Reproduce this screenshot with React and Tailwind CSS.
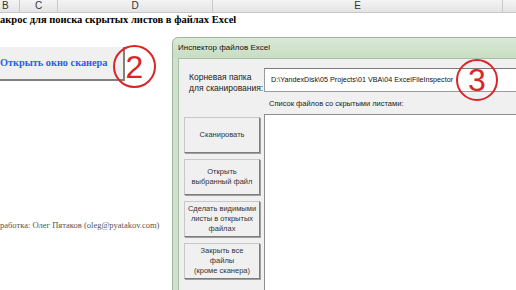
export default function App() {
  const ui = { fontFamily: '"Liberation Sans", Arial, sans-serif' };
  const serif = { fontFamily: '"Liberation Serif", "Times New Roman", serif' };

  const buttons = [
    ["Сканировать"],
    ["Открыть", "выбранный файл"],
    ["Сделать видимыми", "листы в открытых", "файлах"],
    ["Закрыть все", "файлы", "(кроме сканера)"],
  ];

  return (
    <div className="relative h-[290px] w-[516px] overflow-hidden bg-white">
      {/* column headers */}
      <div
        className="flex h-[13px] border-b border-[#c6c6c6] bg-gradient-to-b from-[#f4f4f4] to-[#e4e4e4] text-[10px] leading-[12px] text-[#333]"
        style={ui}
      >
        <div className="w-[20px] border-r border-[#c8c8c8] pl-[2px]">B</div>
        <div className="w-[38px] border-r border-[#c8c8c8] text-center">C</div>
        <div className="w-[155px] border-r border-[#c8c8c8] text-center">D</div>
        <div className="w-[290px] border-r border-[#c8c8c8] text-center">E</div>
        <div className="flex-1" />
      </div>

      {/* sheet */}
      <div className="flex flex-col" style={serif}>
        <div className="h-[14px] whitespace-nowrap text-[10.5px] font-bold leading-[14px] text-black">
          акрос для поиска скрытых листов в файлах Excel
        </div>
        <div className="mt-[20px] flex h-[34px] w-[125px] items-center whitespace-nowrap border-r-2 border-b-2 border-[#808080] bg-[#f0f0f0] text-[10.3px] font-bold text-[#2a5cf5]">
          Открыть окно сканера
        </div>
        <div className="mt-[138px] whitespace-nowrap text-[8.5px] leading-[12px] text-[#555]">
          работка: Олег Пятаков (oleg@pyatakov.com)
        </div>
      </div>

      {/* dialog window */}
      <div
        className="absolute left-[172px] top-[37px] flex h-[270px] w-[400px] flex-col rounded-tl-[6px] border border-[#9db59a] bg-[#cfe2cb] text-[#111]"
        style={ui}
      >
        <div className="flex h-[20px] shrink-0 items-center whitespace-nowrap rounded-tl-[6px] bg-gradient-to-b from-[#d9e9d6] to-[#c8ddc4] pl-[5px] text-[8px]">
          Инспектор файлов Excel
        </div>
        <div className="ml-[5px] flex flex-1 flex-col border-t border-l border-[#a9bea6] bg-[#f0f0f0] pt-[9px]">
          <div className="flex">
            <div className="w-[85px] shrink-0 whitespace-nowrap pl-[10px] pt-[4px] text-[8.5px] leading-[11px] text-[#222]">
              Корневая папка
              <br />
              для сканирования:
            </div>
            <div className="flex h-[24px] flex-1 items-center whitespace-nowrap border border-[#9a9a9a] border-t-[#7a7a7a] bg-white pl-[6px] text-[7.2px] text-[#111]">
              D:\YandexDisk\05 Projects\01 VBA\04 ExcelFileInspector
            </div>
          </div>
          <div className="flex flex-1">
            <div className="flex w-[85px] shrink-0 flex-col gap-[6px] pl-[5px] pt-[23px]">
              {buttons.map((lines, i) => (
                <div
                  key={i}
                  className="flex h-[36px] w-[76px] shrink-0 flex-col items-center justify-center whitespace-nowrap border border-[#c8c8c8] border-r-[#7d7d7d] border-b-[#7d7d7d] bg-[#f0f0f0] text-center text-[7.5px] leading-[10px] text-[#333] shadow-[1px_1px_0_#a0a0a0]"
                >
                  {lines.map((l) => (
                    <span key={l}>{l}</span>
                  ))}
                </div>
              ))}
            </div>
            <div className="flex flex-1 flex-col">
              <div className="flex h-[20px] items-center whitespace-nowrap pl-[5px] text-[7.5px] text-[#222]">
                Список файлов со скрытыми листами:
              </div>
              <div className="flex-1 border border-[#8f8f8f] bg-white" />
            </div>
          </div>
        </div>
      </div>

      {/* callout circles */}
      <div
        className="absolute left-[113px] top-[45px] flex h-[43px] w-[43px] items-center justify-center rounded-full border-[2.5px] border-[#d8262a] text-[32px] leading-none text-[#d8262a]"
        style={ui}
      >
        2
      </div>
      <div
        className="absolute left-[456px] top-[59px] flex h-[42px] w-[42px] items-center justify-center rounded-full border-[2.5px] border-[#d8262a] text-[32px] leading-none text-[#d8262a]"
        style={ui}
      >
        3
      </div>
    </div>
  );
}
